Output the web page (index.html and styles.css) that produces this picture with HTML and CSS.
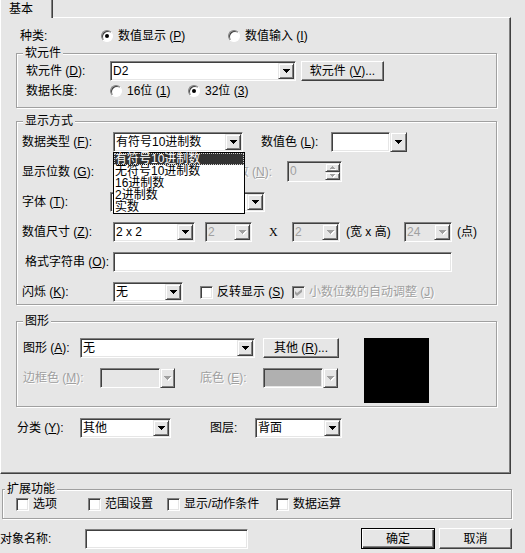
FILE: index.html
```html
<!DOCTYPE html>
<html lang="zh-CN">
<head>
<meta charset="utf-8">
<title>数值显示</title>
<link rel="stylesheet" href="styles.css">
</head>
<body>

<div class="tabs"><div class="tab">基本</div></div>

<div class="panel">

  <div class="row pl19">
    <span class="lbl w81">种类:</span>
    <span class="opt w127"><span class="radio on"></span><span>数值显示 (<u>P</u>)</span></span>
    <span class="opt"><span class="radio"></span><span>数值输入 (<u>I</u>)</span></span>
  </div>

  <!-- 软元件 -->
  <div class="group g-device">
    <span class="group-title">软元件</span>
    <div class="row">
      <span class="lbl w84">软元件 (<u>D</u>):</span>
      <div class="combo w186"><span class="combo-text">D2</span><span class="drop"></span></div>
      <button class="btn w83 ml5">软元件 (<u>V</u>)...</button>
    </div>
    <div class="row">
      <span class="lbl w84">数据长度:</span>
      <span class="opt w78"><span class="radio"></span><span>16位 (<u>1</u>)</span></span>
      <span class="opt"><span class="radio on"></span><span>32位 (<u>3</u>)</span></span>
    </div>
  </div>

  <!-- 显示方式 -->
  <div class="group g-display">
    <span class="group-title">显示方式</span>
    <div class="rows">
      <div class="row">
        <span class="lbl w91">数据类型 (<u>F</u>):</span>
        <div class="combo w130 open">
          <span class="combo-text">有符号10进制数</span><span class="drop"></span>
          <div class="list">
            <div class="sel">有符号10进制数</div>
            <div>无符号10进制数</div>
            <div>16进制数</div>
            <div>2进制数</div>
            <div>实数</div>
          </div>
        </div>
        <span class="lbl w70 ml18">数值色 (<u>L</u>):</span>
        <div class="color-combo w76"><span class="color-field white"></span><span class="drop w17"></span></div>
      </div>
      <div class="row">
        <span class="lbl w91">显示位数 (<u>G</u>):</span>
        <div class="combo w60"><span class="combo-text"></span><span class="drop"></span></div>
        <span class="lbl w99 right dis-text">小数位数 (<u>N</u>):</span>
        <div class="spin ml15">
          <span class="spin-text">0</span>
          <span class="spin-btns"><span class="spin-up"></span><span class="spin-down"></span></span>
        </div>
      </div>
      <div class="row">
        <span class="lbl w88">字体 (<u>T</u>):</span>
        <div class="combo w155"><span class="combo-text"></span><span class="drop"></span></div>
      </div>
      <div class="row">
        <span class="lbl w91">数值尺寸 (<u>Z</u>):</span>
        <div class="combo w82"><span class="combo-text">2 x 2</span><span class="drop"></span></div>
        <div class="combo disabled w47 ml10"><span class="combo-text">2</span><span class="drop"></span></div>
        <span class="lbl w40 pl17 serif">X</span>
        <div class="combo disabled w48"><span class="combo-text">2</span><span class="drop"></span></div>
        <span class="lbl w58 ml6">(宽 x 高)</span>
        <div class="combo disabled w48"><span class="combo-text">24</span><span class="drop"></span></div>
        <span class="lbl ml5">(点)</span>
      </div>
      <div class="row">
        <span class="lbl w88 ml3">格式字符串 (<u>O</u>):</span>
        <span class="field w339"></span>
      </div>
      <div class="row">
        <span class="lbl w91">闪烁 (<u>K</u>):</span>
        <div class="combo w70"><span class="combo-text">无</span><span class="drop"></span></div>
        <span class="opt w92 ml17"><span class="check"></span><span>反转显示 (<u>S</u>)</span></span>
        <span class="opt dis-text"><span class="check dis"><svg width="7" height="7" viewBox="0 0 7 7"><polygon points="0,2 2,4 7,0 7,3 2,7 0,5" fill="#a0a0a0"/></svg></span><span>小数位数的自动调整 (<u>J</u>)</span></span>
      </div>
    </div>
  </div>

  <!-- 图形 -->
  <div class="group g-shape">
    <span class="group-title">图形</span>
    <div class="shape-body">
      <div class="rows">
        <div class="row">
          <span class="lbl w57">图形 (<u>A</u>):</span>
          <div class="combo w175"><span class="combo-text">无</span><span class="drop"></span></div>
          <button class="btn w76 ml8">其他 (<u>R</u>)...</button>
        </div>
        <div class="row">
          <span class="lbl w77 dis-text">边框色 (<u>M</u>):</span>
          <div class="color-combo w75 disabled"><span class="color-field"></span><span class="drop w15"></span></div>
          <span class="lbl w63 ml25 dis-text">底色 (<u>E</u>):</span>
          <div class="color-combo w75 disabled"><span class="color-field grey"></span><span class="drop w15"></span></div>
        </div>
      </div>
      <div class="swatch"></div>
    </div>
  </div>

  <div class="row row-class">
    <span class="lbl w63">分类 (<u>Y</u>):</span>
    <div class="combo w91"><span class="combo-text">其他</span><span class="drop"></span></div>
    <span class="lbl w45 ml39">图层:</span>
    <div class="combo w87"><span class="combo-text">背面</span><span class="drop"></span></div>
  </div>

</div>

<!-- 扩展功能 -->
<div class="group g-ext">
  <span class="group-title">扩展功能</span>
  <span class="opt w72"><span class="check"></span><span>选项</span></span>
  <span class="opt w79"><span class="check"></span><span>范围设置</span></span>
  <span class="opt w109"><span class="check"></span><span>显示/动作条件</span></span>
  <span class="opt"><span class="check"></span><span>数据运算</span></span>
</div>

<div class="row row-bottom">
  <span class="lbl w85">对象名称:</span>
  <span class="field w163"></span>
  <button class="btn btn-default w74">确定</button>
  <button class="btn w73 ml4">取消</button>
</div>

</body>
</html>
```

FILE: styles.css
```css
* {
  box-sizing: border-box;
}

body {
  margin: 0;
  width: 525px;
  height: 553px;
  overflow: hidden;
  background: #e6e6e6;
  color: #000;
  font: 12px/14px "Liberation Sans", "Noto Sans CJK SC", sans-serif;
}

u {
  text-decoration: underline;
  text-underline-offset: 1px;
}

.serif {
  font-family: "Liberation Serif", serif;
}

/* tab strip */
.tabs {
  display: flex;
  height: 17px;
}

.tab {
  position: relative;
  z-index: 1;
  width: 53px;
  height: 18px;
  padding: 2px 0 0 8px;
  background: #e6e6e6;
  border-left: 1px solid #fff;
  border-right: 1px solid #404040;
  box-shadow: inset -1px 0 0 #808080;
}

.panel {
  width: 511px;
  height: 457px;
  padding-top: 8px;
  border: 1px solid;
  border-color: #fff #404040 #404040 #fff;
  box-shadow: inset -1px -1px 0 #808080;
}

/* rows and labels */
.row {
  display: flex;
  align-items: center;
  height: 20px;
}

.rows {
  display: flex;
  flex-direction: column;
  gap: 10px;
}

.lbl {
  flex: none;
  white-space: nowrap;
}

.right { text-align: right; }

.dis-text {
  color: #a0a0a0;
  text-shadow: 1px 1px 0 #fff;
}

/* group boxes */
.group {
  position: relative;
  width: 481px;
  margin-left: 15px;
  border: 1px solid #a0a0a0;
  box-shadow: inset 1px 1px 0 #fff, 1px 1px 0 #fff;
}

.group-title {
  position: absolute;
  top: -7px;
  left: 6px;
  padding: 0 2px;
  line-height: 13px;
  background: #e6e6e6;
  white-space: nowrap;
}

.g-device {
  margin-top: 7px;
  padding: 7px 0 6px 9px;
}

.g-display {
  margin-top: 13px;
  padding: 10px 0 2px 5px;
}

.g-shape {
  margin-top: 16px;
  padding: 16px 0 3px 6px;
}

.shape-body {
  display: flex;
}

.swatch {
  width: 65px;
  height: 65px;
  margin-left: 25px;
  background: #000;
}

.row-class {
  margin-top: 11px;
  padding-left: 16px;
}

.g-ext {
  display: flex;
  align-items: center;
  width: 510px;
  margin: 15px 0 0 2px;
  padding: 7px 0 7px 13px;
}

.g-ext .group-title {
  left: 2px;
}

.row-bottom {
  height: 21px;
  margin-top: 9px;
}

/* 3d borders */
.combo,
.field,
.spin,
.color-field,
.check,
.radio {
  border: 1px solid;
  border-color: #808080 #fff #fff #808080;
  box-shadow: inset 1px 1px 0 #404040, inset -1px -1px 0 #e6e6e6;
}

.combo {
  flex: none;
  display: flex;
  height: 20px;
  padding: 1px;
  background: #fff;
}

.combo-text {
  flex: 1;
  padding-left: 1px;
  line-height: 16px;
  overflow: hidden;
  white-space: nowrap;
}

.drop,
.spin-up,
.spin-down {
  --arrow: #000;
  flex: none;
  display: flex;
  align-items: center;
  justify-content: center;
  width: 16px;
  background: #e6e6e6;
  border: 1px solid;
  border-color: #e6e6e6 #404040 #404040 #e6e6e6;
  box-shadow: inset 1px 1px 0 #fff, inset -1px -1px 0 #808080;
}

.drop::after {
  content: "";
  width: 7px;
  height: 4px;
  background:
    linear-gradient(var(--arrow), var(--arrow)) 0 0 / 7px 1px no-repeat,
    linear-gradient(var(--arrow), var(--arrow)) 1px 1px / 5px 1px no-repeat,
    linear-gradient(var(--arrow), var(--arrow)) 2px 2px / 3px 1px no-repeat,
    linear-gradient(var(--arrow), var(--arrow)) 3px 3px / 1px 1px no-repeat;
}

.disabled .drop,
.spin-up,
.spin-down {
  --arrow: #a0a0a0;
}

.disabled .drop::after,
.spin-up::after,
.spin-down::after {
  filter: drop-shadow(1px 1px 0 #fff);
}

.combo.disabled {
  background: #e6e6e6;
  color: #a0a0a0;
}

.open {
  position: relative;
}

.list {
  position: absolute;
  z-index: 2;
  top: 19px;
  left: -1px;
  width: 132px;
  border: 1px solid #000;
  background: #fff;
}

.list div {
  height: 12px;
  padding-left: 1px;
  line-height: 12px;
  white-space: nowrap;
}

.list .sel {
  background: #333;
  color: #fff;
  outline: 1px dotted #ccc;
  outline-offset: -1px;
}

.field {
  flex: none;
  height: 20px;
  background: #fff;
}

.color-combo {
  flex: none;
  display: flex;
  height: 20px;
}

.color-combo .drop {
  height: 20px;
}

.color-field {
  flex: 1;
  background: #e6e6e6;
}

.color-field.white { background: #fff; }
.color-field.grey { background: #b0b0b0; }

.spin {
  flex: none;
  display: flex;
  width: 55px;
  height: 21px;
  margin-top: -1px;
  padding: 1px;
  background: #e6e6e6;
}

.spin-text {
  flex: 1;
  padding-left: 1px;
  line-height: 17px;
  color: #a0a0a0;
}

.spin-btns {
  display: flex;
  flex-direction: column;
  width: 15px;
}

.spin-up,
.spin-down {
  width: 15px;
  flex: 1;
}

.spin-up::after,
.spin-down::after {
  content: "";
  width: 5px;
  height: 3px;
}

.spin-up::after {
  background:
    linear-gradient(var(--arrow), var(--arrow)) 2px 0 / 1px 1px no-repeat,
    linear-gradient(var(--arrow), var(--arrow)) 1px 1px / 3px 1px no-repeat,
    linear-gradient(var(--arrow), var(--arrow)) 0 2px / 5px 1px no-repeat;
}

.spin-down::after {
  background:
    linear-gradient(var(--arrow), var(--arrow)) 0 0 / 5px 1px no-repeat,
    linear-gradient(var(--arrow), var(--arrow)) 1px 1px / 3px 1px no-repeat,
    linear-gradient(var(--arrow), var(--arrow)) 2px 2px / 1px 1px no-repeat;
}

/* radios and checkboxes */
.opt {
  flex: none;
  display: flex;
  align-items: center;
  gap: 5px;
  white-space: nowrap;
}

.g-ext .opt,
.row .opt:has(.check) {
  gap: 4px;
}

.radio {
  flex: none;
  display: flex;
  align-items: center;
  justify-content: center;
  width: 12px;
  height: 12px;
  border-radius: 50%;
  background: #fff;
  box-shadow: inset 1px 1px 0 #404040;
}

.radio.on::after {
  content: "";
  width: 4px;
  height: 4px;
  border-radius: 50%;
  background: #000;
}

.check {
  flex: none;
  display: flex;
  align-items: center;
  justify-content: center;
  width: 13px;
  height: 13px;
  background: #fff;
}

.check.dis {
  background: #e6e6e6;
}

/* buttons */
.btn {
  flex: none;
  height: 20px;
  padding: 0;
  font: inherit;
  color: #000;
  background: #e6e6e6;
  border: 1px solid;
  border-color: #fff #404040 #404040 #fff;
  box-shadow: inset -1px -1px 0 #808080;
}

.row-bottom .btn {
  height: 21px;
}

.btn-default {
  margin-left: 113px;
  border-color: #000;
  box-shadow: inset 1px 1px 0 #fff, inset -1px -1px 0 #404040, inset -2px -2px 0 #808080;
}

/* sizes */
.pl17 { padding-left: 17px; }
.pl19 { padding-left: 19px; }
.ml3 { margin-left: 3px; }
.ml4 { margin-left: 4px; }
.ml5 { margin-left: 5px; }
.ml6 { margin-left: 6px; }
.ml8 { margin-left: 8px; }
.ml10 { margin-left: 10px; }
.ml15 { margin-left: 15px; }
.ml17 { margin-left: 17px; }
.ml18 { margin-left: 18px; }
.ml25 { margin-left: 25px; }
.ml39 { margin-left: 39px; }

.w15 { width: 15px; }
.w17 { width: 17px; }
.w40 { width: 40px; }
.w45 { width: 45px; }
.w47 { width: 47px; }
.w48 { width: 48px; }
.w57 { width: 57px; }
.w58 { width: 58px; }
.w60 { width: 60px; }
.w63 { width: 63px; }
.w70 { width: 70px; }
.w72 { width: 72px; }
.w73 { width: 73px; }
.w74 { width: 74px; }
.w75 { width: 75px; }
.w76 { width: 76px; }
.w77 { width: 77px; }
.w78 { width: 78px; }
.w79 { width: 79px; }
.w81 { width: 81px; }
.w82 { width: 82px; }
.w83 { width: 83px; }
.w84 { width: 84px; }
.w85 { width: 85px; }
.w87 { width: 87px; }
.w88 { width: 88px; }
.w91 { width: 91px; }
.w92 { width: 92px; }
.w99 { width: 99px; }
.w109 { width: 109px; }
.w127 { width: 127px; }
.w130 { width: 130px; }
.w155 { width: 155px; }
.w163 { width: 163px; }
.w175 { width: 175px; }
.w186 { width: 186px; }
.w339 { width: 339px; }
```
